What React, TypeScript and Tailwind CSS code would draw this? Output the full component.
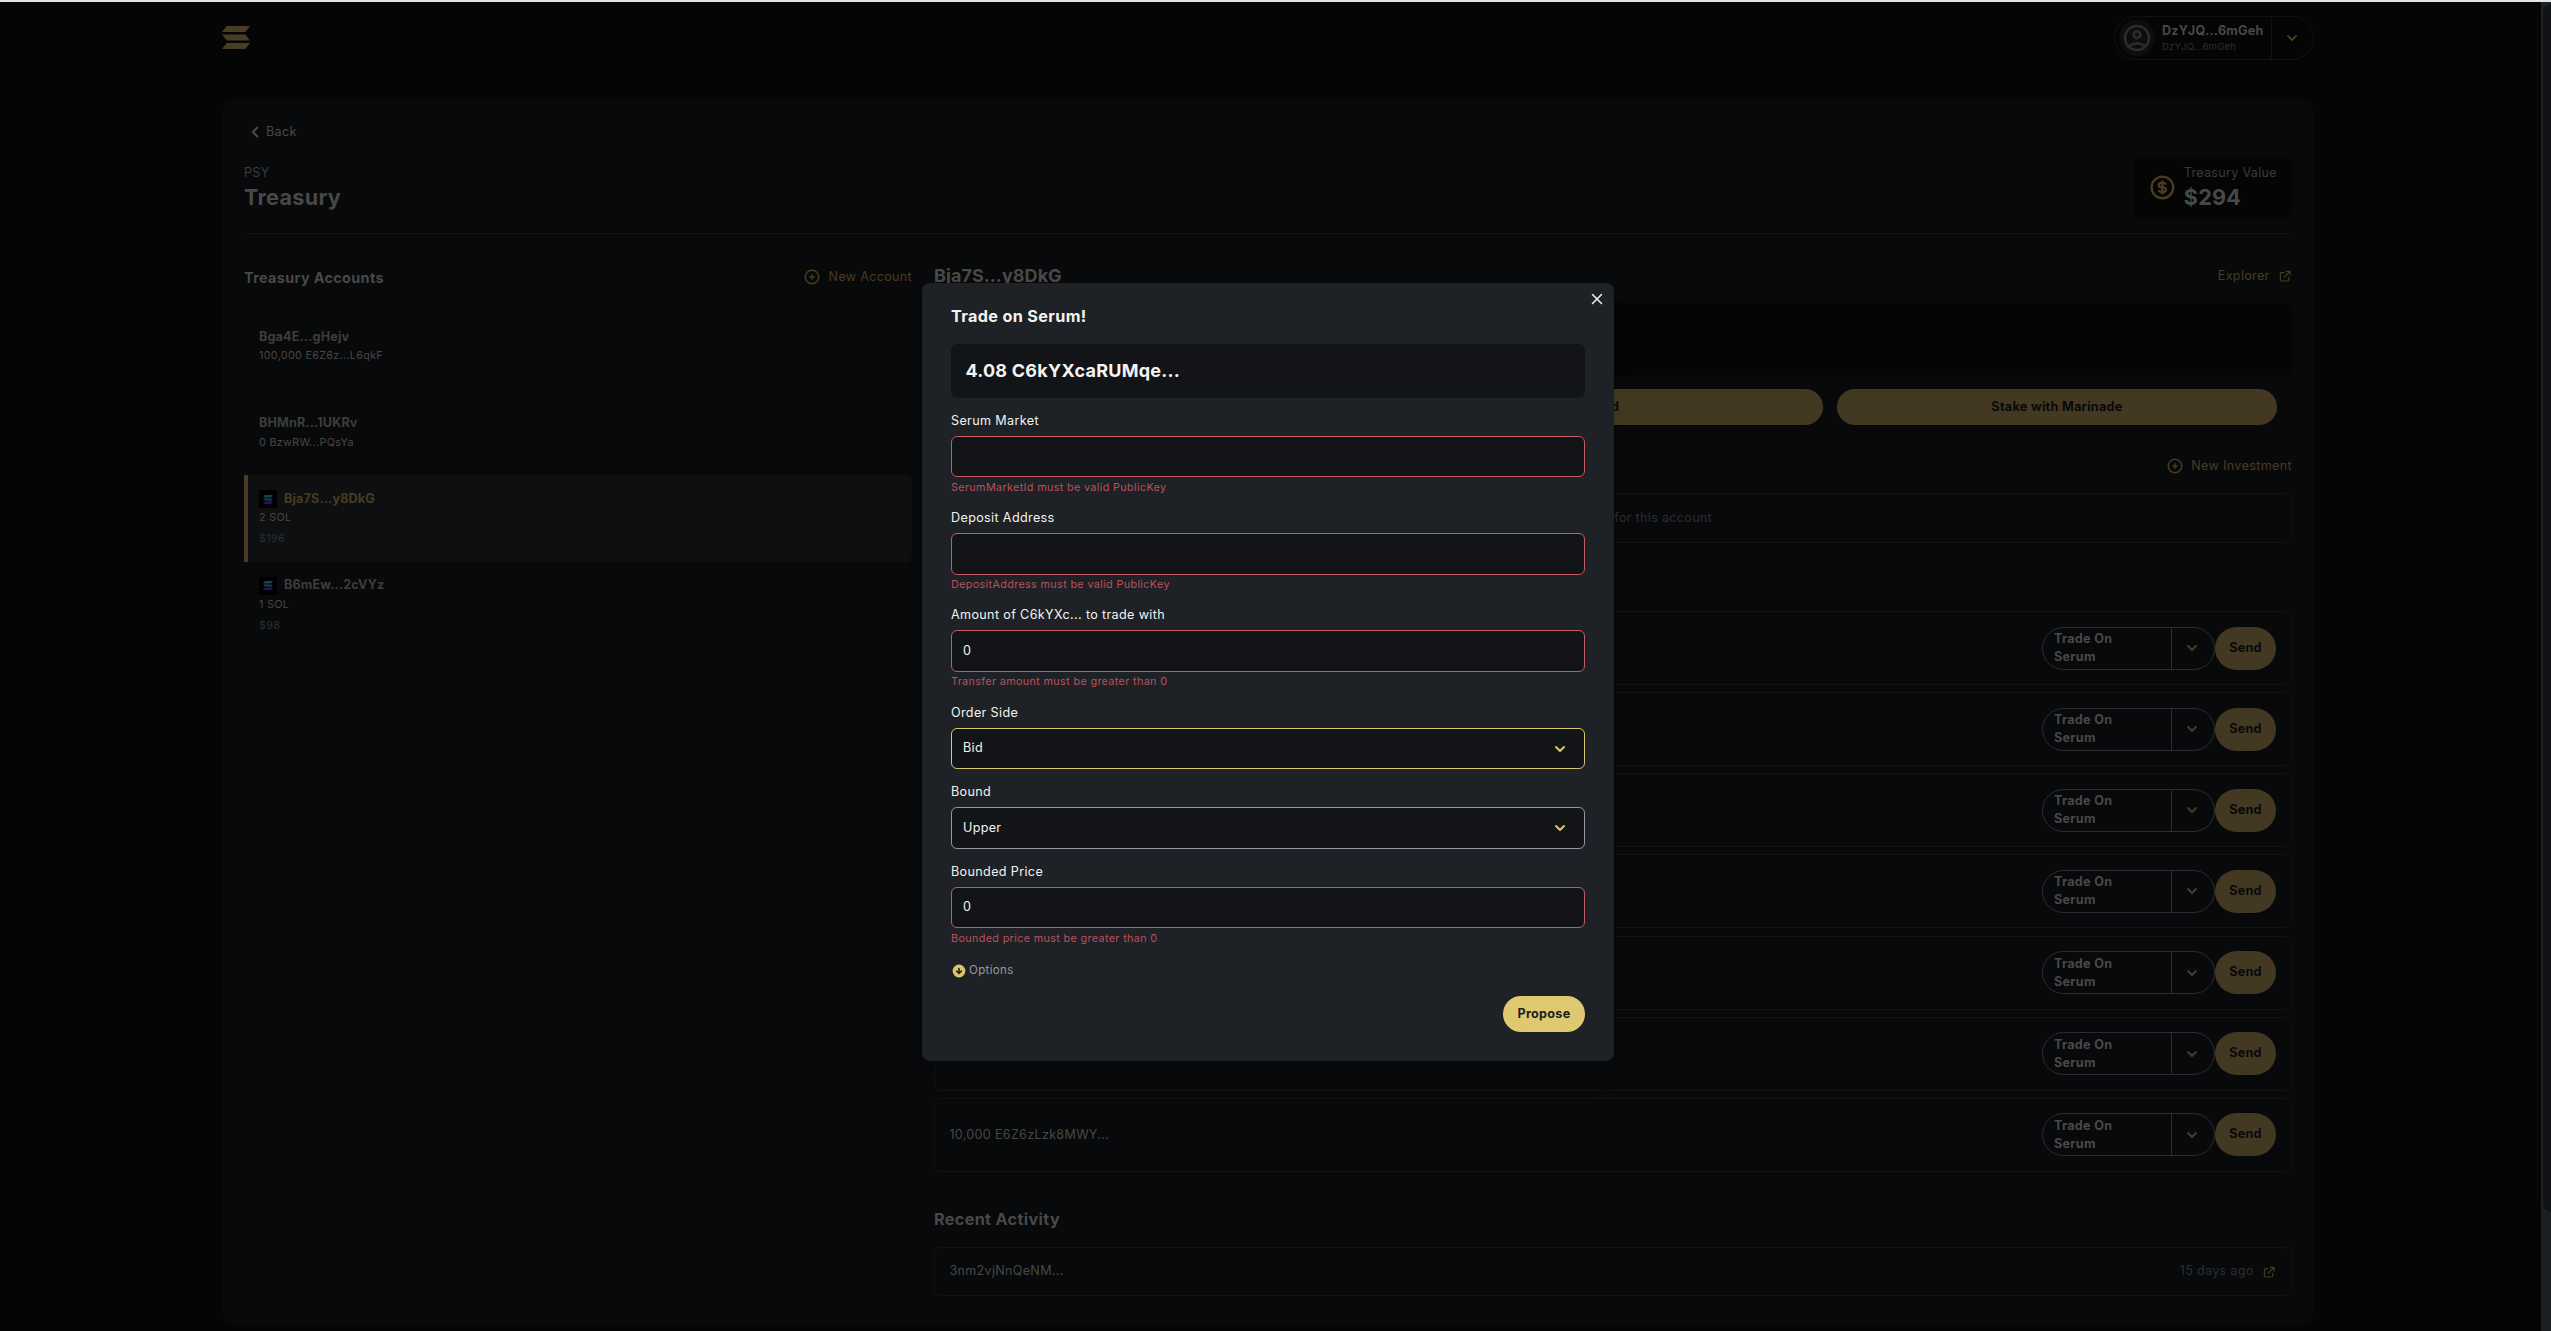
import React from "react";
import {
  HiArrowCircleDown,
  HiChevronDown,
  HiChevronLeft,
  HiOutlineCurrencyDollar,
  HiOutlineExternalLink,
  HiOutlinePlusCircle,
  HiOutlineX,
} from "react-icons/hi";
import { MdOutlineAccountCircle } from "react-icons/md";

function SolanaMark() {
  return (
    <svg className="h-[23px] w-7" viewBox="0 0 28 23" fill="#483c22">
      <path d="M4.6 0H28l-4.6 6H0z" />
      <path d="M0 8.6h23.4l4.6 5.8H4.6z" />
      <path d="M4.6 17H28l-4.6 6H0z" />
    </svg>
  );
}

function TokenIcon() {
  return (
    <span className="mr-[7px] flex size-[18px] items-center justify-center bg-black">
      <svg className="h-[9px] w-[10px]" viewBox="0 0 28 26">
        <path fill="#075043" d="M4.6 0H28l-4.6 7H0z" />
        <path fill="#1d3158" d="M0 9.5h23.4l4.6 7H4.6z" />
        <path fill="#360f5c" d="M4.6 19H28l-4.6 7H0z" />
      </svg>
    </span>
  );
}

function AccountHeader() {
  return (
    <header className="flex h-[97px] items-start justify-between pt-[14px]">
      <div className="-ml-px pt-[10px]">
        <SolanaMark />
      </div>
      <div className="-mr-px flex h-11 w-[200px] rounded-full border border-[#101113]">
        <div className="flex w-[157px] items-center border-r border-[#101113] pl-1">
          <span className="flex size-9 items-center justify-center rounded-full bg-[#0b0d0f]">
            <MdOutlineAccountCircle className="size-[32px] text-[#2b2c2e]" />
          </span>
          <div className="ml-[7px] flex flex-col">
            <span className="text-[12.6px] leading-[16px] font-bold tracking-[0.25px] text-[#484847]">DzYJQ...6mGeh</span>
            <span className="text-[9.6px] leading-[15px] tracking-[0.2px] text-[#2c2d30]">DzYJQ...6mGeh</span>
          </div>
        </div>
        <div className="flex flex-1 items-center justify-center pr-px">
          <HiChevronDown className="size-5 text-[#483c22]" />
        </div>
      </div>
    </header>
  );
}

type Account = { name: string; amount: string; value?: string; token?: boolean; active?: boolean };

const accounts: Account[] = [
  { name: "Bga4E...gHejv", amount: "100,000 E6Z6z...L6qkF" },
  { name: "BHMnR...1UKRv", amount: "0 BzwRW...PQsYa" },
  { name: "Bja7S...y8DkG", amount: "2 SOL", value: "$196", token: true, active: true },
  { name: "B6mEw...2cVYz", amount: "1 SOL", value: "$98", token: true },
];

function AccountRow({ account }: { account: Account }) {
  return (
    <div
      className={
        "flex h-[86.4px] flex-col justify-center rounded-r-md border-l-4 pt-[3px] pl-[11px] " +
        (account.active ? "border-[#483c22] bg-[#0d0f11]" : "border-transparent")
      }
    >
      <div className="flex h-[18px] items-center">
        {account.token && <TokenIcon />}
        <span
          className={
            "text-[12.6px] font-bold tracking-[0.15px] " + (account.active ? "text-[#483c22]" : "text-[#3d3d3d]")
          }
        >
          {account.name}
        </span>
      </div>
      <span className="text-[10.8px] leading-[20px] tracking-[0.3px] text-[#474746]">{account.amount}</span>
      {account.value && (
        <span className="mt-px text-[10.8px] leading-[20px] tracking-[0.3px] text-[#2c2d30]">{account.value}</span>
      )}
    </div>
  );
}

function AccountList() {
  return (
    <section className="w-[668px]">
      <div className="flex h-9 items-center justify-between">
        <h2 className="pt-1 text-[14.4px] font-bold tracking-[0.35px] text-[#484847]">Treasury Accounts</h2>
        <span className="flex items-center gap-[7.5px] pt-[2px] text-[12.6px] text-[#483c22]">
          <HiOutlinePlusCircle className="size-[18px]" />
          New Account
        </span>
      </div>
      <div className="mt-[8.5px]">
        {accounts.map((account) => (
          <AccountRow key={account.name} account={account} />
        ))}
      </div>
    </section>
  );
}

const assets = ["", "", "", "", "", "", "10,000 E6Z6zLzk8MWY..."];

function AssetRow({ label }: { label: string }) {
  return (
    <div className="mb-[7.17px] flex h-[74px] items-center justify-between rounded-md border border-[#101214] pr-[15px] pl-[14.4px]">
      <span className="pt-px text-[12.6px] text-[#474746]">{label}</span>
      <div className="flex h-[43px]">
        <div className="flex w-[173px] rounded-full border border-[#2c2d30]">
          <div className="flex w-[129px] items-center border-r border-[#2c2d30] pl-[11px]">
            <span className="w-[70px] text-[12.6px] leading-[18px] font-bold text-[#484847]">Trade On Serum</span>
          </div>
          <div className="flex flex-1 items-center justify-center pr-[3px]">
            <HiChevronDown className="size-5 text-[#483c22]" />
          </div>
        </div>
        <div className="flex w-[61px] items-center justify-center rounded-full bg-[#433822] text-[12.6px] font-bold text-[#08090b]">
          Send
        </div>
      </div>
    </div>
  );
}

function AccountDetails() {
  return (
    <section className="w-[1358px]">
      <div className="flex h-9 items-center justify-between">
        <h2 className="-mt-[2px] text-[18px] font-bold tracking-[0.05px] text-[#484847]">Bja7S...y8DkG</h2>
        <span className="flex items-center gap-2 text-[12.6px] text-[#483c22]">
          Explorer
          <HiOutlineExternalLink className="size-[14.4px]" />
        </span>
      </div>
      <div className="mt-[9px] h-[72px] rounded-md bg-[#050505]" />
      <div className="mt-[14px] flex h-9 justify-end gap-[14px] pr-[15px] text-[12.6px] font-bold text-[#08090b]">
        <div className="flex w-[440px] items-center justify-center rounded-full bg-[#433822]">Send</div>
        <div className="flex w-[440px] items-center justify-center rounded-full bg-[#433822]">Stake with Marinade</div>
      </div>
      <div className="mt-[31px] flex h-5 items-center justify-end">
        <span className="flex items-center gap-[7.5px] text-[12.6px] tracking-[0.35px] text-[#483c22]">
          <HiOutlinePlusCircle className="size-[18px]" />
          New Investment
        </span>
      </div>
      <div className="mt-[17px] mb-[68px] flex h-[50px] items-center justify-center rounded-md border border-[#101214] text-[12.6px] text-[#2c2d30]">
        No investments for this account
      </div>
      {assets.map((asset, index) => (
        <AssetRow key={index} label={asset} />
      ))}
      <h3 className="mt-[35.5px] text-[16.2px] leading-[24px] font-bold tracking-[0.35px] text-[#484847]">
        Recent Activity
      </h3>
      <div className="mt-[16px] flex h-[49px] items-center justify-between rounded-md border border-[#101214] pr-[15px] pl-[14.4px] text-[12.6px]">
        <span className="text-[#474746]">3nm2vjNnQeNM...</span>
        <span className="flex items-center gap-2 text-[#2c2d30]">
          15 days ago
          <HiOutlineExternalLink className="size-[14.4px] text-[#483c22]" />
        </span>
      </div>
    </section>
  );
}

function TreasuryPage() {
  return (
    <main className="h-[1226px] rounded-lg bg-[#08090b] pt-[22px] pr-[21px] pl-[21px]">
      <div className="flex h-[21px] items-center pt-px text-[12.6px] text-[#474746]">
        <HiChevronLeft className="size-[22px]" />
        Back
      </div>
      <div className="mt-[15px] flex h-[62px] justify-between">
        <div className="flex flex-col pt-[7px]">
          <span className="text-[12.6px] leading-[18px] text-[#3a3b3d]">PSY</span>
          <h1 className="text-[21.6px] leading-[31px] font-bold text-[#484847]">Treasury</h1>
        </div>
        <div className="flex w-[158px] rounded-md bg-[#050505] pl-[14.4px]">
          <HiOutlineCurrencyDollar className="mt-4 size-[28.8px] text-[#483c22]" />
          <div className="ml-[6.5px] flex flex-col pt-[7px]">
            <span className="text-[12.6px] leading-[18px] text-[#3a3b3d]">Treasury Value</span>
            <span className="text-[21.6px] leading-[31px] font-bold text-[#484847]">$294</span>
          </div>
        </div>
      </div>
      <div className="mt-[14px] h-px bg-[#111315]" />
      <div className="mt-6 flex justify-between">
        <AccountList />
        <AccountDetails />
      </div>
    </main>
  );
}

function Field({ label, value, error }: { label: string; value?: string; error: string }) {
  return (
    <div className="flex h-[97.2px] flex-col">
      <label className="h-6 text-[12.6px] leading-[18.4px] tracking-[0.35px] text-[#f4f3f0]">{label}</label>
      <div className="flex h-[41.4px] items-center rounded-md border border-[#c75a61] bg-[#131418] pl-[11px] text-[12.6px] text-[#f4f3f0]">
        {value}
      </div>
      <span className="mt-[1.5px] text-[10.8px] leading-[18px] tracking-[0.35px] text-[#b9525b]">{error}</span>
    </div>
  );
}

function SelectField({ label, value, focused }: { label: string; value: string; focused?: boolean }) {
  return (
    <div className="flex h-[79.6px] flex-col">
      <label className="h-6 text-[12.6px] leading-[18.4px] tracking-[0.35px] text-[#f4f3f0]">{label}</label>
      <div
        className={
          "flex h-[41.4px] items-center justify-between rounded-md border bg-[#131418] pt-px pr-[14px] pl-[11px] text-[12.6px] text-[#f4f3f0] " +
          (focused ? "border-[#dcc66b]" : "border-[#9499a4]")
        }
      >
        {value}
        <HiChevronDown className="size-5 text-[#dcc66b]" />
      </div>
    </div>
  );
}

function TradeModal() {
  return (
    <div className="relative h-[778px] w-[692px] rounded-lg bg-[#1e2125] px-[29px] pt-[22px] shadow-xl">
      <HiOutlineX className="absolute top-[7px] right-2 size-[18px] text-[#f4f3f0]" />
      <h2 className="text-[16.2px] leading-[23px] font-bold tracking-[0.35px] text-[#f4f3f0]">Trade on Serum!</h2>
      <div className="mt-4 mb-[14px] flex h-[54px] items-center rounded-md bg-[#131418] pb-px pl-[14.4px] text-[18px] font-bold tracking-[0.25px] text-[#f4f3f0]">
        4.08 C6kYXcaRUMqe...
      </div>
      <Field label="Serum Market" error="SerumMarketId must be valid PublicKey" />
      <Field label="Deposit Address" error="DepositAddress must be valid PublicKey" />
      <Field label="Amount of C6kYXc... to trade with" value="0" error="Transfer amount must be greater than 0" />
      <SelectField label="Order Side" value="Bid" focused />
      <SelectField label="Bound" value="Upper" />
      <Field label="Bounded Price" value="0" error="Bounded price must be greater than 0" />
      <div className="flex h-[22px] items-center text-[11.5px] tracking-[0.35px] text-[#9499a4]">
        <HiArrowCircleDown className="mt-px mr-[2px] size-[16px] text-[#dcc66b]" />
        Options
      </div>
      <div className="mt-[14px] flex justify-end">
        <button className="h-9 w-[82px] rounded-full bg-[#dfc970] pt-px text-[12.6px] font-bold text-[#1a1d20]">
          Propose
        </button>
      </div>
    </div>
  );
}

export default function App() {
  return (
    <div className="relative flex h-[1331px] w-[2551px] flex-col overflow-hidden bg-[#050505] font-['Inter',sans-serif] tracking-[0.3px]">
      <div className="h-[2px] w-full shrink-0 bg-[#e2e4e6]" />
      <div className="flex flex-1 justify-between">
        <div className="ml-[223px] w-[2090px]">
          <AccountHeader />
          <TreasuryPage />
        </div>
        <div className="w-[10px] bg-[#1c1f24] pl-[2px]">
          <div className="mt-[2px] h-[1208px] rounded-l-full bg-[#121318]" />
        </div>
      </div>
      <div className="absolute inset-0 flex items-start justify-center pt-[283px] pr-[15px]">
        <TradeModal />
      </div>
    </div>
  );
}
